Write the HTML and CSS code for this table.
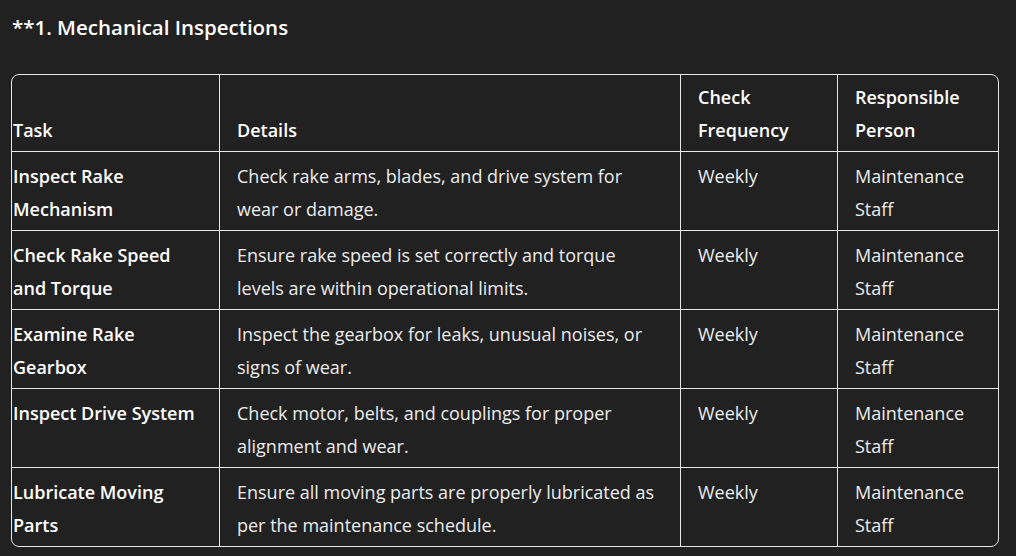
FILE: index.html
```html
<!DOCTYPE html>
<html lang="en">
<head>
<meta charset="utf-8">
<title>Mechanical Inspections</title>
<link rel="stylesheet" href="styles.css">
</head>
<body>
<main class="page">
  <h3 class="heading">**1. Mechanical Inspections</h3>
  <div class="table-wrap">
    <table class="grid">
      <colgroup>
        <col class="c-task"><col class="c-details"><col class="c-freq"><col class="c-person">
      </colgroup>
      <thead>
        <tr><th>Task</th><th>Details</th><th>Check Frequency</th><th>Responsible Person</th></tr>
      </thead>
      <tbody>
        <tr><td class="task">Inspect Rake Mechanism</td><td>Check rake arms, blades, and drive system for wear or damage.</td><td>Weekly</td><td>Maintenance Staff</td></tr>
        <tr><td class="task">Check Rake Speed and Torque</td><td>Ensure rake speed is set correctly and torque levels are within operational limits.</td><td>Weekly</td><td>Maintenance Staff</td></tr>
        <tr><td class="task">Examine Rake Gearbox</td><td>Inspect the gearbox for leaks, unusual noises, or signs of wear.</td><td>Weekly</td><td>Maintenance Staff</td></tr>
        <tr><td class="task">Inspect Drive System</td><td>Check motor, belts, and couplings for proper alignment and wear.</td><td>Weekly</td><td>Maintenance Staff</td></tr>
        <tr><td class="task">Lubricate Moving Parts</td><td>Ensure all moving parts are properly lubricated as per the maintenance schedule.</td><td>Weekly</td><td>Maintenance Staff</td></tr>
      </tbody>
    </table>
  </div>
</main>
</body>
</html>
```
FILE: styles.css
```css
html, body {
  margin: 0;
  padding: 0;
  background: #212121;
}
body {
  color: #ececec;
  font-family: "Open Sans", "Noto Sans", sans-serif;
  font-size: 18px;
}
.page {
  padding: 13px 18px 0 11px;
}
.heading {
  margin: 0 0 33px 1px;
  font-size: 20.5px;
  font-weight: 600;
  line-height: 28px;
  color: #fff;
}
.grid {
  width: 988px;
  border-collapse: separate;
  border-spacing: 0;
  border: 1px solid #e8e8e8;
  border-radius: 8px;
  table-layout: fixed;
}
.c-task { width: 208px; }
.c-details { width: 461px; }
.c-freq { width: 157px; }
.c-person { width: auto; }
th, td {
  text-align: left;
  line-height: 33px;
  padding: 8px 18px 4px 17px;
  border-right: 1px solid #e8e8e8;
  border-bottom: 1px solid #e8e8e8;
  color: #ececec;
}
th {
  vertical-align: bottom;
  font-weight: 600;
  color: #fff;
  padding-top: 6px;
  padding-bottom: 4px;
}
td {
  vertical-align: top;
  font-weight: 400;
}
th:first-child, td:first-child {
  padding-left: 1px;
}
th:last-child, td:last-child {
  border-right: none;
}
tbody tr:last-child td {
  border-bottom: none;
}
td.task {
  font-weight: 600;
  color: #fff;
}
```
